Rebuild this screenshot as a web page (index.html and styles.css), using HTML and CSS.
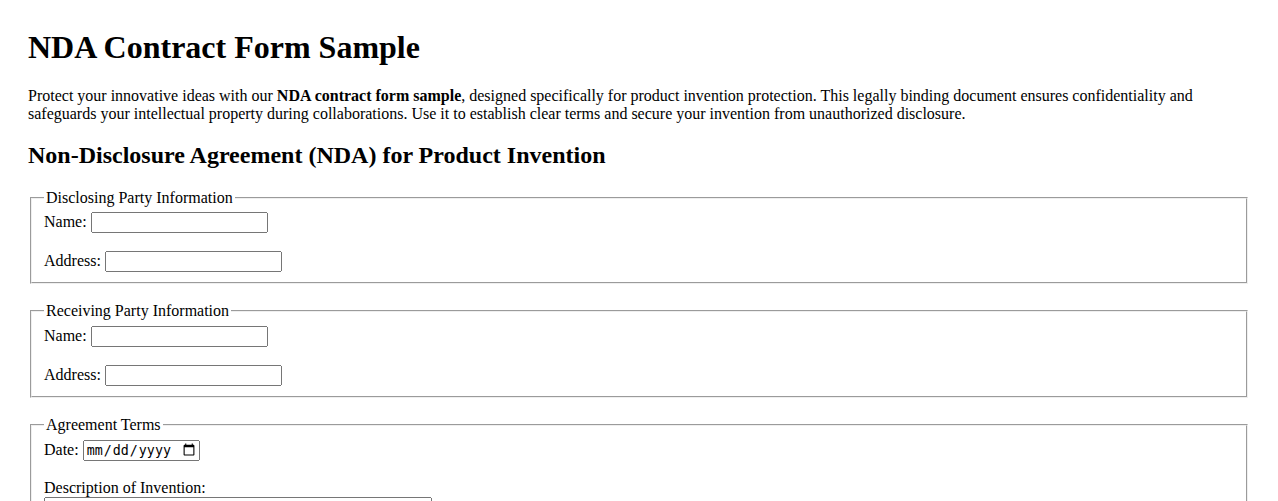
FILE: index.html
```html
<!DOCTYPE html>
<html>
<head>
<meta charset="utf-8">
<title>NDA Contract Form Sample</title>
<link rel="stylesheet" href="styles.css">
</head>
<body>
<h1 class="title">NDA Contract Form Sample</h1>
<p class="intro">Protect your innovative ideas with our <strong>NDA contract form sample</strong>, designed specifically for product invention protection. This legally binding document ensures confidentiality and safeguards your intellectual property during collaborations. Use it to establish clear terms and secure your invention from unauthorized disclosure.</p>
<h2 class="subtitle">Non-Disclosure Agreement (NDA) for Product Invention</h2>
<form>
<fieldset>
<legend>Disclosing Party Information</legend>
<label>Name:</label> <input class="text-field" type="text"><br><br>
<label>Address:</label> <input class="text-field" type="text">
</fieldset>
<br>
<fieldset>
<legend>Receiving Party Information</legend>
<label>Name:</label> <input class="text-field" type="text"><br><br>
<label>Address:</label> <input class="text-field" type="text">
</fieldset>
<br>
<fieldset>
<legend>Agreement Terms</legend>
<label>Date:</label> <input class="date-field" type="date"><br><br>
<label>Description of Invention:</label><br>
<textarea class="desc-field" rows="4" cols="50"></textarea>
</fieldset>
</form>
</body>
</html>
```

FILE: styles.css
```css
body {
  margin: 8px;
  padding: 0 20px;
  font-family: "Liberation Serif", "Times New Roman", serif;
  font-size: 16px;
  color: #000;
  background: #fff;
}
.title {
  margin-bottom: 21px;
}
.intro {
  margin-bottom: 13px;
}
.subtitle {
  margin-top: 18.5px;
}
.text-field {
  box-sizing: border-box;
  width: 177px;
  height: 21px;
}
.date-field {
  box-sizing: border-box;
  width: 117px;
  height: 21px;
}
.desc-field {
  box-sizing: border-box;
  width: 388px;
}
```
